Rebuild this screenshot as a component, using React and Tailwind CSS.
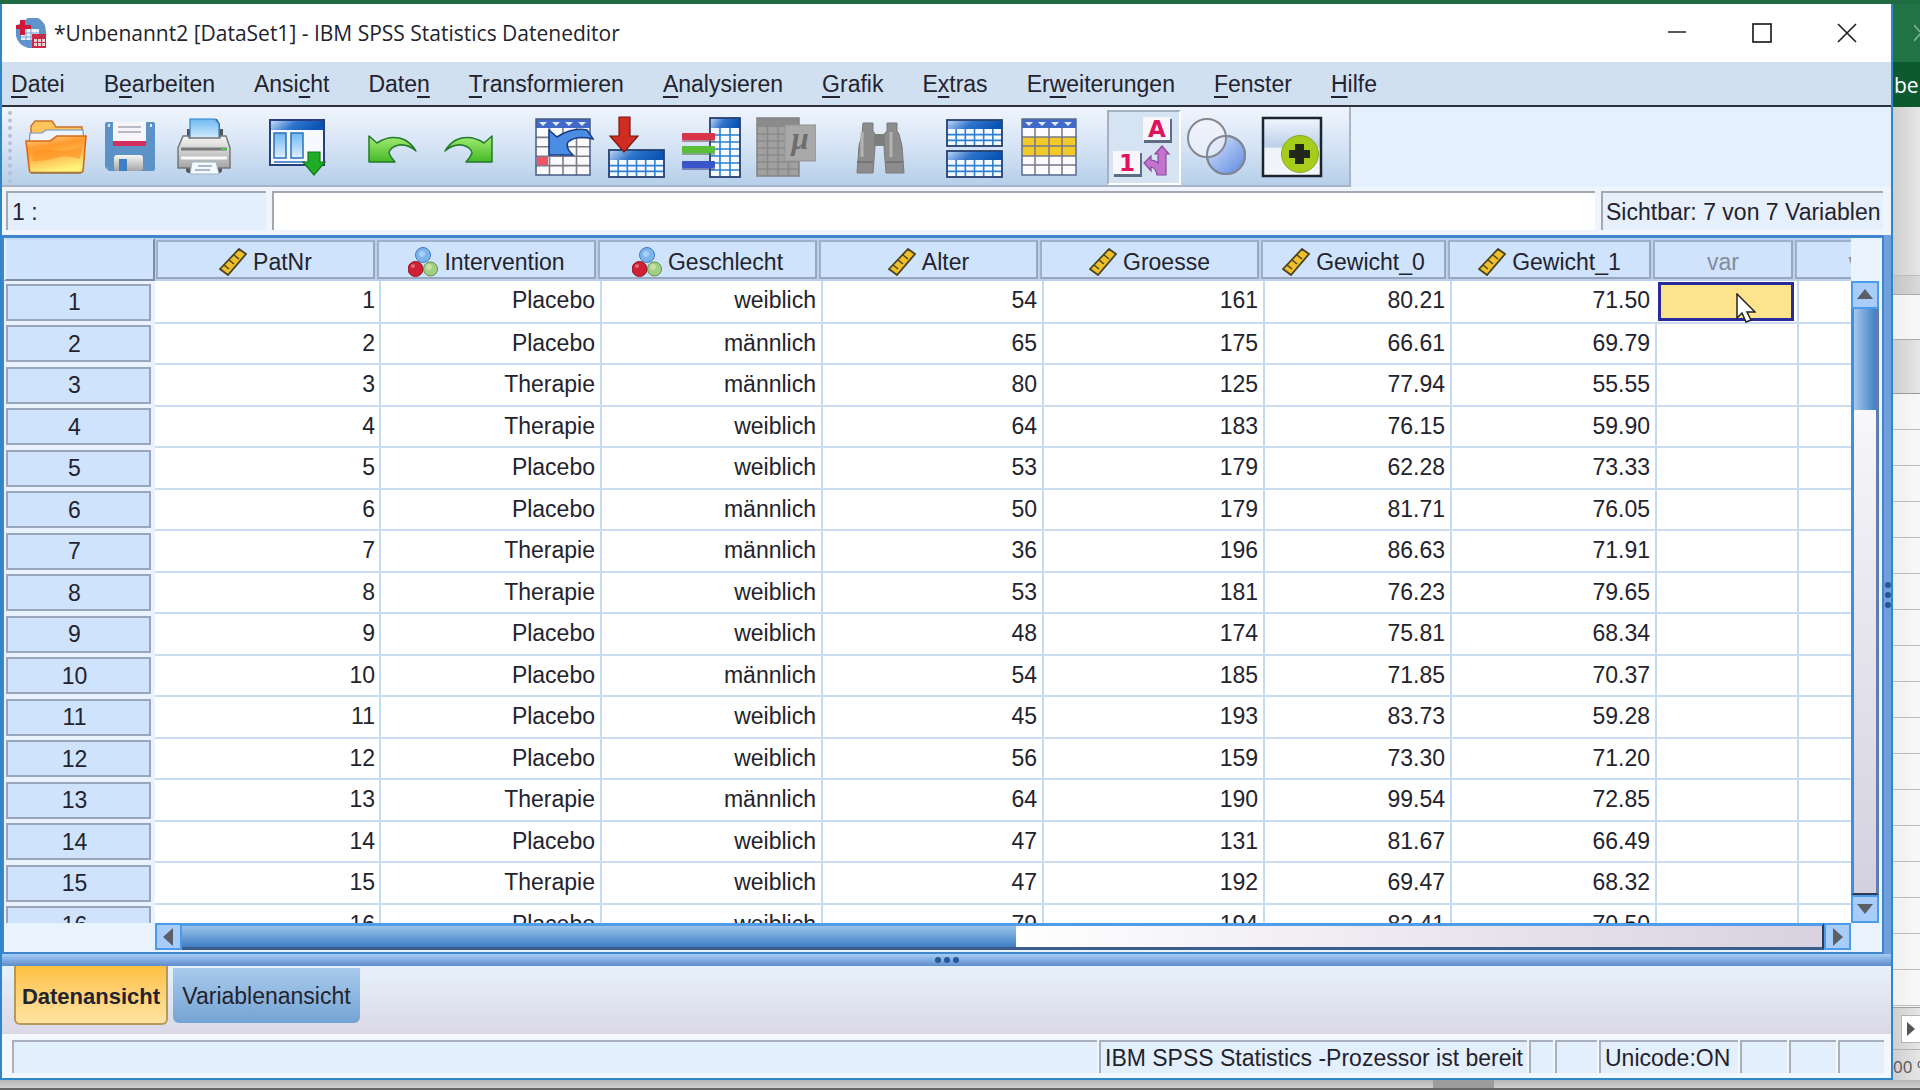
const menus = [
  ["", "D", "atei"],
  ["B", "e", "arbeiten"],
  ["Ansi", "c", "ht"],
  ["Date", "n", ""],
  ["", "T", "ransformieren"],
  ["", "A", "nalysieren"],
  ["", "G", "rafik"],
  ["E", "x", "tras"],
  ["Er", "w", "eiterungen"],
  ["", "F", "enster"],
  ["", "H", "ilfe"],
];

const columns = [
  { name: "PatNr", type: "scale" },
  { name: "Intervention", type: "nominal" },
  { name: "Geschlecht", type: "nominal" },
  { name: "Alter", type: "scale" },
  { name: "Groesse", type: "scale" },
  { name: "Gewicht_0", type: "scale" },
  { name: "Gewicht_1", type: "scale" },
  { name: "var" },
  { name: "var" },
];

const rows = [
  ["1", "Placebo", "weiblich", "54", "161", "80.21", "71.50"],
  ["2", "Placebo", "männlich", "65", "175", "66.61", "69.79"],
  ["3", "Therapie", "männlich", "80", "125", "77.94", "55.55"],
  ["4", "Therapie", "weiblich", "64", "183", "76.15", "59.90"],
  ["5", "Placebo", "weiblich", "53", "179", "62.28", "73.33"],
  ["6", "Placebo", "männlich", "50", "179", "81.71", "76.05"],
  ["7", "Therapie", "männlich", "36", "196", "86.63", "71.91"],
  ["8", "Therapie", "weiblich", "53", "181", "76.23", "79.65"],
  ["9", "Placebo", "weiblich", "48", "174", "75.81", "68.34"],
  ["10", "Placebo", "männlich", "54", "185", "71.85", "70.37"],
  ["11", "Placebo", "weiblich", "45", "193", "83.73", "59.28"],
  ["12", "Placebo", "weiblich", "56", "159", "73.30", "71.20"],
  ["13", "Therapie", "männlich", "64", "190", "99.54", "72.85"],
  ["14", "Placebo", "weiblich", "47", "131", "81.67", "66.49"],
  ["15", "Therapie", "weiblich", "47", "192", "69.47", "68.32"],
  ["16", "Placebo", "weiblich", "79", "194", "82.41", "70.50"],
];

// Shared gradients for the toolbar drawings
function IconDefs() {
  return (
    <svg className="absolute size-0" aria-hidden="true">
      <defs>
        <linearGradient id="orange" x1="0" y1="0" x2="0.3" y2="1">
          <stop offset="0" stopColor="#ffd9a0" />
          <stop offset="0.35" stopColor="#ff9a2a" />
          <stop offset="0.6" stopColor="#ffb04a" />
          <stop offset="1" stopColor="#fff27a" />
        </linearGradient>
        <linearGradient id="blueBar" x1="0" y1="0" x2="1" y2="0.2">
          <stop offset="0" stopColor="#c4dcf8" />
          <stop offset="0.5" stopColor="#2f74cc" />
          <stop offset="1" stopColor="#0a55b4" />
        </linearGradient>
        <linearGradient id="sky" x1="0" y1="0" x2="0" y2="1">
          <stop offset="0" stopColor="#6db8f2" />
          <stop offset="1" stopColor="#e0f1fe" />
        </linearGradient>
        <linearGradient id="metal" x1="0" y1="0" x2="0" y2="1">
          <stop offset="0" stopColor="#f6f6f4" />
          <stop offset="1" stopColor="#a5a5a5" />
        </linearGradient>
        <linearGradient id="green" x1="0" y1="0" x2="0" y2="1">
          <stop offset="0" stopColor="#a4ec72" />
          <stop offset="1" stopColor="#45b926" />
        </linearGradient>
        <linearGradient id="disc" x1="0" y1="0" x2="1" y2="1">
          <stop offset="0" stopColor="#dbe8fb" />
          <stop offset="1" stopColor="#5d88e2" />
        </linearGradient>
        <linearGradient id="sheet" x1="0" y1="0" x2="0" y2="1">
          <stop offset="0" stopColor="#f2f6fc" />
          <stop offset="0.5" stopColor="#b9d0ea" />
          <stop offset="0.52" stopColor="#eef3fa" />
          <stop offset="1" stopColor="#f4f5fa" />
        </linearGradient>
      </defs>
    </svg>
  );
}

function OpenIcon() {
  return (
    <>
      <path d="M6 34V10l4-5h17l4 6h26v23z" fill="#ffc45c" stroke="#c8742a" strokeWidth="1.5" />
      <path d="M4 30l1-13h12l4-3h37l1 14z" fill="#eef4fd" stroke="#6f93cf" strokeWidth="1.2" />
      <path d="M1 25h24l7-5h29l-3 35q-1 1.500-2 1.500H6q-1 0-1.500-1.500z" fill="url(#orange)" stroke="#d9681a" strokeWidth="1.600" />
      <path d="M7 37q12-6 22-3t28-3l-2 12q-14-5-25-1T8 45z" fill="#ff8c1c" opacity=".55" />
      <path d="M6 57h50" stroke="#8f7a52" strokeWidth="1.500" />
    </>
  );
}

function SaveIcon() {
  return (
    <>
      <path d="M8 6h46q2 0 2 2v45q0 2-2 2H10l-4-4V8q0-2 2-2z" fill="#5c92c6" />
      <path d="M14 6h33v23H14z" fill="#f6f5f9" />
      <path d="M14 25h33v5H14z" fill="#d32f5e" />
      <path d="M19 11h23M19 16h23" stroke="#b9b9c6" strokeWidth="2" />
      <rect x="15" y="39" width="29" height="16" rx="3" fill="url(#metal)" />
      <rect x="20" y="43" width="8" height="12" fill="#3f7fc4" />
      <rect x="9" y="8" width="2" height="3" fill="#dceafa" />
      <rect x="51" y="8" width="2" height="3" fill="#dceafa" />
    </>
  );
}

function PrintIcon() {
  return (
    <>
      <path d="M14 13h4V3h26l3 5v5h3v12H14z" fill="#555" />
      <path d="M17 3h25l4 5v16H17z" fill="url(#sky)" stroke="#2f82cc" strokeWidth="1.200" />
      <rect x="13" y="48" width="36" height="9" rx="3" fill="#555" />
      <path d="M10 20h6v2h31v-2h6l4 12v20H5V32z" fill="url(#metal)" stroke="#77777a" strokeWidth="1.500" />
      <path d="M8 33h46" stroke="#77777c" strokeWidth="3" />
      <path d="M48 33h6" stroke="#4cc34c" strokeWidth="2" />
      <path d="M8 42h46" stroke="#fafafa" strokeWidth="3" />
      <path d="M19 46h24l3 12H17z" fill="#f4f9fe" stroke="#9fb3c8" />
      <path d="M25 50h14M22 54h15" stroke="#8fa2bd" strokeWidth="1.500" />
    </>
  );
}

function DialogIcon() {
  return (
    <>
      <rect x="2" y="4" width="54" height="45" fill="#f6faff" stroke="#27407e" strokeWidth="2" />
      <rect x="3" y="5" width="52" height="9" fill="url(#blueBar)" />
      <rect x="6" y="17" width="12" height="25" fill="url(#sky)" stroke="#2d70ba" strokeWidth="1.500" />
      <rect x="23" y="17" width="12" height="25" fill="url(#sky)" stroke="#2d70ba" strokeWidth="1.500" />
      <path d="M6 46h31" stroke="#2d70ba" strokeWidth="1.500" />
      <path d="M40 36h12v10h5L46 59 35 46h5z" fill="#21ac26" stroke="#11791a" strokeWidth="1.200" />
    </>
  );
}

function UndoIcon() {
  return (
    <path
      d="M6 20l8 7q14-9 28-3q7 4 11 11q-8-7-17-6q-9 2-10 8q2 5 6 9H6z"
      fill="url(#green)" stroke="#237a2c" strokeWidth="1.500" strokeLinejoin="round"
    />
  );
}

function RedoIcon() {
  return (
    <path
      d="M55 20l-8 7q-14-9-28-3q-7 4-11 11q8-7 17-6q9 2 10 8q-2 5-6 9h26z"
      fill="url(#green)" stroke="#237a2c" strokeWidth="1.500" strokeLinejoin="round"
    />
  );
}

function Grid({ x, y, w, h, cols, lines, stroke, fill }) {
  let d = "";
  for (let i = 1; i < cols; i++) d += `M${x + (w * i) / cols} ${y}v${h}`;
  for (let i = 1; i < lines; i++) d += `M${x} ${y + (h * i) / lines}h${w}`;
  return (
    <>
      <rect x={x} y={y} width={w} height={h} fill={fill} />
      <path d={d} stroke={stroke} strokeWidth="1.600" />
    </>
  );
}

function SheetHead() {
  return (
    <>
      <rect x="4" y="3" width="54" height="9" fill="#4169c8" />
      <path d="M7 6h8l-4 4zM20 6h8l-4 4zM33 6h8l-4 4zM46 6h8l-4 4z" fill="#dfe9fb" />
    </>
  );
}

function GotoCaseIcon() {
  return (
    <>
      <Grid x={4} y={12} w={54} h={47} cols={4} lines={5} stroke="#7b7b86" fill="#fafafd" />
      <SheetHead />
      <rect x="5" y="41" width="11" height="8" fill="#f05464" />
      <rect x="4" y="3" width="54" height="56" fill="none" stroke="#4a5a86" strokeWidth="1.500" />
      <path d="M17 14l8 7q15-10 30-7l6 9q-17-4-25 3q-3 6 5 13H17z" fill="#4a8de2" stroke="#1a3f86" strokeWidth="1.600" />
    </>
  );
}

function BlueTable({ x, y, w, h, head, cols, lines }) {
  return (
    <>
      <Grid x={x} y={y + head} w={w} h={h - head} cols={cols} lines={lines} stroke="#2d7fd0" fill="#f4faff" />
      <rect x={x} y={y} width={w} height={head} fill="url(#blueBar)" />
      <rect x={x} y={y} width={w} height={h} fill="none" stroke="#25406f" strokeWidth="1.800" />
    </>
  );
}

function GotoVarIcon() {
  return (
    <>
      <BlueTable x={3} y={34} w={55} h={27} head={10} cols={6} lines={3} />
      <path d="M13 1h11v19h8L18 36 4 20h9z" fill="#cf2d22" stroke="#7e1712" strokeWidth="1.200" />
    </>
  );
}

function VariablesIcon() {
  return (
    <>
      <BlueTable x={30} y={2} w={30} h={59} head={10} cols={3} lines={7} />
      <rect x="2" y="17" width="33" height="7" rx="1" fill="#d8344a" />
      <rect x="2" y="24" width="33" height="2" fill="#8b5060" opacity=".6" />
      <rect x="2" y="30" width="33" height="7" rx="1" fill="#58bf36" />
      <rect x="2" y="37" width="33" height="2" fill="#4d7c50" opacity=".6" />
      <rect x="2" y="45" width="33" height="7" rx="1" fill="#3a55c8" />
      <rect x="2" y="52" width="33" height="2" fill="#40508f" opacity=".6" />
    </>
  );
}

function StatsIcon() {
  return (
    <>
      <Grid x={3} y={11} w={42} h={49} cols={4} lines={7} stroke="#8a8a8a" fill="#a0a0a0" />
      <rect x="3" y="2" width="42" height="9" fill="#8b8b8b" />
      <rect x="3" y="2" width="42" height="58" fill="none" stroke="#828282" strokeWidth="1.500" />
      <rect x="31" y="9" width="31" height="36" fill="#a8a8a8" stroke="#939393" />
      <text x="46" y="33" textAnchor="middle" fontSize="31" fontStyle="italic" fontWeight="bold" fill="#6d6d6d" fontFamily="Liberation Serif, serif">µ</text>
    </>
  );
}

function FindIcon() {
  return (
    <g fill="#8c8c8c">
      <path d="M14 7h10v8l2 3v13l-2 26H8l2-27 3-12zM38 7h10v8l2 3 3 12 2 27H37l-2-26V18l3-3z" stroke="#7a7a7a" />
      <rect x="25" y="18" width="11" height="12" fill="#7d7d7d" />
      <path d="M13 16v25M42 16v25" stroke="#b3b3b3" strokeWidth="3" />
      <path d="M8 46h16M37 46h17" stroke="#6c6c6c" strokeWidth="1.500" />
    </g>
  );
}

function SplitIcon() {
  return (
    <>
      <BlueTable x={3} y={4} w={55} h={26} head={9} cols={6} lines={3} />
      <BlueTable x={3} y={35} w={55} h={26} head={9} cols={6} lines={3} />
    </>
  );
}

function SelectIcon() {
  return (
    <>
      <rect x="4" y="12" width="54" height="47" fill="#fbfbfe" />
      <rect x="4" y="21" width="54" height="19" fill="#f0cb28" />
      <path d="M4 21h54M4 30h54M4 40h54M4 49h54M17 12v47M31 12v47M44 12v47" stroke="#77778a" strokeWidth="1.500" />
      <SheetHead />
      <rect x="4" y="3" width="54" height="56" fill="none" stroke="#5a6a92" strokeWidth="1.500" />
    </>
  );
}

function LabelsIcon() {
  return (
    <>
      <rect x="31" y="3" width="28" height="24" fill="#5d6d86" />
      <rect x="30" y="1" width="27" height="23" fill="#f7f7fb" />
      <rect x="1" y="37" width="28" height="24" fill="#5d6d86" />
      <rect x="0" y="35" width="27" height="23" fill="#f7f7fb" />
      <g fill="#e0115f" fontFamily="DejaVu Sans, sans-serif" fontWeight="bold" fontSize="23" textAnchor="middle">
        <text x="44" y="21">A</text>
        <text x="14" y="55">1</text>
      </g>
      <path d="M49 30l7 8h-3v21h-9q-1-7-6-8v4l-7-8 7-7v4q4 0 7 3V38h-3z" fill="#c273cb" stroke="#8a4a98" strokeWidth="1.200" />
    </>
  );
}

function SetsIcon() {
  return (
    <>
      <circle cx="39" cy="39" r="19" fill="url(#disc)" stroke="#7f8694" strokeWidth="2" />
      <circle cx="20" cy="22" r="19" fill="#f1f4fc" fillOpacity=".7" stroke="#85878f" strokeWidth="2" />
      <circle cx="39" cy="39" r="19" fill="none" stroke="#7f8694" strokeWidth="2" />
    </>
  );
}

function CustomizeIcon() {
  return (
    <>
      <rect x="2" y="2" width="58" height="58" fill="url(#sheet)" stroke="#1c2430" strokeWidth="2.500" />
      <circle cx="39" cy="38" r="18.500" fill="#a6cc1c" stroke="#86a81f" />
      <path d="M34 28h9v6h6v8h-6v6h-9v-6h-6v-8h6z" fill="#23261b" />
    </>
  );
}

const toolGroups = [
  [["Öffnen", OpenIcon], ["Speichern", SaveIcon], ["Drucken", PrintIcon]],
  [["Dialogfelder", DialogIcon]],
  [["Rückgängig", UndoIcon], ["Wiederholen", RedoIcon]],
  [["Gehe zu Fall", GotoCaseIcon], ["Gehe zu Variable", GotoVarIcon], ["Variablen", VariablesIcon], ["Statistik", StatsIcon]],
  [["Suchen", FindIcon]],
  [["Datei aufteilen", SplitIcon], ["Fälle auswählen", SelectIcon]],
  [["Wertelabels", LabelsIcon], ["Variablensets", SetsIcon], ["Anpassen", CustomizeIcon]],
];

function ScaleIcon() {
  return (
    <svg viewBox="0 0 28 28" className="size-7">
      <path d="M1 21L20 1l7 5L9 27z" fill="#f0c02c" stroke="#4b4420" strokeWidth="1.800" />
      <path d="M5 17l5 4M10 12l5 4M15 7l5 4" stroke="#4b4420" strokeWidth="1.600" />
    </svg>
  );
}

function NominalIcon() {
  return (
    <svg viewBox="0 0 30 30" className="size-[30px]">
      <circle cx="15" cy="8" r="7.500" fill="#7db4ec" stroke="#3f78bd" />
      <circle cx="7.500" cy="22" r="7.500" fill="#cf2236" stroke="#8d1526" />
      <circle cx="22.500" cy="22" r="7" fill="#a3cf84" stroke="#5f8f49" />
      <circle cx="14" cy="7" r="3" fill="#a9cff5" />
      <circle cx="5" cy="19" r="2" fill="#e66a78" />
      <circle cx="21" cy="20" r="3" fill="#c3e3ad" />
    </svg>
  );
}

function AppIcon() {
  return (
    <svg viewBox="0 0 30 30" className="size-[30px]">
      <path d="M12 0h10q8 4 8 14v10q-5 6-12 6h-6Q2 27 0 18V8z" fill="#5f93cc" />
      <path d="M5 11h18v11H5z" fill="#e8f0fa" />
      <path d="M5 15h18M5 19h18M10 11v11M15 11v11" stroke="#7ba3d3" />
      <path d="M4 2h5v5h6v4H9v6H4v-6H0V7h4z" fill="#d01838" />
      <path d="M16 16h14v14H16z" fill="#c92a48" />
      <path d="M18 21h3v3h-3zM22 21h3v3h-3zM26 21h3v3h-3zM18 25h3v3h-3zM22 25h3v3h-3zM26 25h3v3h-3z" fill="#f5ccd4" />
    </svg>
  );
}

function TitleBar() {
  return (
    <header className="flex h-[58px] shrink-0 items-center bg-white pr-[2px] pl-[14px]">
      <AppIcon />
      <h1 className="ml-2 flex-1 font-['Open_Sans',sans-serif] text-[21px]">
        *Unbenannt2 [DataSet1] - IBM SPSS Statistics Dateneditor
      </h1>
      <button aria-label="Minimieren" className="flex w-[85px] justify-center">
        <svg viewBox="0 0 20 20" className="size-5"><path d="M1 9h18" stroke="#222" strokeWidth="1.500" /></svg>
      </button>
      <button aria-label="Maximieren" className="flex w-[85px] justify-center">
        <svg viewBox="0 0 20 20" className="size-5"><rect x="1" y="1" width="18" height="18" fill="none" stroke="#222" strokeWidth="1.700" /></svg>
      </button>
      <button aria-label="Schließen" className="flex w-[85px] justify-center">
        <svg viewBox="0 0 20 20" className="size-5"><path d="M1 1l18 18M19 1L1 19" stroke="#222" strokeWidth="1.700" /></svg>
      </button>
    </header>
  );
}

function MenuBar() {
  return (
    <nav className="flex h-[45px] shrink-0 items-center gap-[39px] border-b-2 border-[#2b323c] bg-[#d0e0f1] pl-[9px]">
      {menus.map(([before, key, after]) => (
        <button key={before + key + after} className="whitespace-nowrap">
          {before}
          <span className="underline decoration-2 underline-offset-4">{key}</span>
          {after}
        </button>
      ))}
    </nav>
  );
}

function Toolbar() {
  return (
    <div className="flex h-20 shrink-0 bg-[#e4f0fc]">
      <div className="flex items-center gap-[21px] border-r-2 border-b-2 border-[#a9b4c6] bg-linear-to-b from-[#f0f5fd] via-[#d6e4f5] to-[#b6cfe9] pt-[2px] pr-5">
        <div className="-mr-[14px] ml-[6px] h-[72px] w-1 border-l-4 border-dotted border-[#b3bfd3]" />
        {toolGroups.map((group, i) => (
          <div key={i} className="flex">
            {group.map(([label, Icon]) => (
              <button
                key={label}
                aria-label={label}
                className={
                  label === "Wertelabels"
                    ? "flex h-[75px] w-[74px] items-center justify-center border-2 border-t-[#a7b0c2] border-r-white border-b-white border-l-[#a7b0c2] bg-[#d5e3f3]"
                    : "flex h-[75px] w-[74px] items-center justify-center"
                }
              >
                <svg viewBox="0 0 62 62" className="size-[62px] shrink-0"><Icon /></svg>
              </button>
            ))}
          </div>
        ))}
      </div>
    </div>
  );
}

function EditRow() {
  return (
    <div className="flex h-[48px] shrink-0 gap-[6px] bg-[#f0f5fd] pt-1 pr-2 pb-[5px] pl-1">
      <input
        aria-label="Zelle"
        defaultValue="1 :"
        className="w-[260px] border-t-2 border-l-2 border-[#a3a8b3] bg-[#e3effc] pl-1 outline-none"
      />
      <input aria-label="Zellinhalt" className="min-w-0 flex-1 border-t-2 border-l-2 border-[#a3a8b3] bg-white outline-none" />
      <div className="flex w-[282px] items-center border-t-2 border-l-2 border-[#a3a8b3] bg-[#e6effc] pl-[3px] whitespace-nowrap">
        Sichtbar: 7 von 7 Variablen
      </div>
    </div>
  );
}

function DataGrid() {
  return (
    <table className="w-[1931px] table-fixed border-collapse">
      <colgroup>
        <col className="w-[151px]" />
        <col className="w-[221px]" />
        <col className="w-[221px]" />
        <col className="w-[221px]" />
        <col className="w-[221px]" />
        <col className="w-[221px]" />
        <col className="w-[187px]" />
        <col className="w-[205px]" />
        <col className="w-[142px]" />
        <col className="w-[141px]" />
      </colgroup>
      <thead>
        <tr className="h-[43px] bg-[#b9d0ee]">
          <td className="p-0">
            <div className="h-[43px] border-2 border-t-[#c5dcf8] border-r-[#7f8da3] border-b-[#7f8da3] border-l-[#e6f1ff] bg-[#cfe3fd]" />
          </td>
          {columns.map((col, i) => (
            <th key={i} scope="col" className="p-0 font-normal">
              <div className="mx-[1px] mt-[2px] mb-[2px] flex h-[39px] items-center justify-center gap-[6px] border-2 border-t-[#9eb0ca] border-r-[#9aa6bd] border-b-[#9aa6bd] border-l-[#9eb0ca] bg-[#cfe3fd] pt-1">
                {col.type === "scale" && <ScaleIcon />}
                {col.type === "nominal" && <NominalIcon />}
                <span className={col.type ? "" : "text-[#858c9c]"}>{col.name}</span>
              </div>
            </th>
          ))}
        </tr>
      </thead>
      <tbody>
        {rows.map((row, r) => (
          <tr key={row[0]} className="h-[41px] odd:h-[42px]">
            <th scope="row" className="bg-[#e9f2fe] p-0 font-normal">
              <div className="mr-[4px] ml-[2px] flex h-[37px] items-center justify-center border-2 border-[#98a6bb] bg-[#cfe3fd] pr-2">
                {row[0]}
              </div>
            </th>
            {columns.map((col, c) => (
              <td key={c} className="h-px border-b-2 border-[#c9dcf0] p-0 pl-[3px] text-right">
                {r === 0 && c === 7 ? (
                  <div className="relative ml-[3px] h-[39px] w-[136px] border-[3px] border-[#2a2a9c] bg-[#fde48c]">
                    <svg viewBox="0 0 20 30" className="absolute top-2 left-[75px] h-[30px] w-5">
                      <path d="M1 1v24l5-5 4 9 5-2-4-8h8z" fill="#fff" stroke="#222" strokeWidth="1.500" />
                    </svg>
                  </div>
                ) : (
                  <div className={c === 0 ? "h-full min-h-[39px] pt-px pr-px leading-9" : "h-full min-h-[39px] border-l-2 border-[#c3dbf3] pt-px pr-[2px] leading-9"}>{row[c]}</div>
                )}
              </td>
            ))}
          </tr>
        ))}
      </tbody>
    </table>
  );
}

function Arrow({ d }) {
  return (
    <svg viewBox="0 0 20 20" className="size-5">
      <path d={d} fill="#5a6068" />
    </svg>
  );
}

function GridPanel() {
  return (
    <div className="flex min-h-0 flex-1 bg-linear-to-r from-[#a7ccf5] to-[#6f9fdc]">
      <div className="flex min-w-0 flex-1 flex-col border-2 border-t-[3px] border-[#3f85cc] bg-[#e9f3fe]">
        <div className="flex min-h-0 flex-1">
          <div className="min-w-0 flex-1 overflow-hidden bg-white">
            <DataGrid />
          </div>
          <div className="flex w-[31px] shrink-0 flex-col pt-[43px] pr-[3px]">
            <button aria-label="Nach oben" className="flex h-[28px] items-center justify-center border-2 border-[#4b9bea] bg-[#a9cdfa]">
              <Arrow d="M10 4l8 10H2z" />
            </button>
            <div className="flex-1 border-r-[3px] border-b-2 border-l-[3px] border-r-[#5e7fae] border-b-[#333a55] border-l-[#3d8fe0] bg-linear-to-b from-white to-[#d3d1e0]">
              <div className="h-[101px] bg-linear-to-r from-[#a5c8ea] to-[#3f80c4]" />
            </div>
            <button aria-label="Nach unten" className="flex h-[28px] items-center justify-center border-2 border-[#4b9bea] bg-[#a9cdfa]">
              <Arrow d="M10 15l8-10H2z" />
            </button>
          </div>
        </div>
        <div className="flex h-[29px] shrink-0 pr-[31px] pb-[2px] pl-[151px]">
          <button aria-label="Nach links" className="flex w-[27px] items-center justify-center border-2 border-[#4b9bea] bg-[#a9cdfa]">
            <Arrow d="M4 10L14 1v18z" />
          </button>
          <div className="flex-1 border-t-[3px] border-r-2 border-b-[3px] border-t-[#4f9de8] border-r-[#333a55] border-b-[#3c5c8c] bg-linear-to-r from-[#d8d6e2] via-white to-[#d8d2e0]">
            <div className="h-full w-[834px] bg-linear-to-b from-[#9cc3e8] to-[#3b7fc6]" />
          </div>
          <button aria-label="Nach rechts" className="flex w-[27px] items-center justify-center border-2 border-[#4b9bea] bg-[#a9cdfa]">
            <Arrow d="M15 10L5 1v18z" />
          </button>
        </div>
      </div>
      <div className="flex w-[7px] shrink-0 flex-col items-center justify-center gap-1">
        <span className="size-[6px] rounded-full bg-[#28569a]" />
        <span className="size-[6px] rounded-full bg-[#28569a]" />
        <span className="size-[6px] rounded-full bg-[#28569a]" />
      </div>
    </div>
  );
}

function ViewTabs() {
  return (
    <div role="tablist" className="flex h-[68px] shrink-0 items-start gap-[5px] bg-linear-to-b from-[#e6f1fc] to-[#dbd8e6] pl-[12px]">
      <button
        role="tab"
        aria-selected="true"
        className="h-[59px] w-[154px] rounded-b-md border-2 border-t-0 border-[#b59a55] bg-linear-to-b from-[#fdc140] to-[#ffe3a0] pt-1 text-[22px] font-bold"
      >
        Datenansicht
      </button>
      <button
        role="tab"
        aria-selected="false"
        className="mt-[2px] h-[55px] w-[187px] rounded-b-md bg-linear-to-b from-[#a9cbec] to-[#74a3d3]"
      >
        Variablenansicht
      </button>
    </div>
  );
}

function StatusBar() {
  return (
    <footer className="flex h-11 shrink-0 gap-[2px] bg-[#f3f7fe] pt-[6px] pr-[7px] pb-[5px] pl-[10px] whitespace-nowrap *:flex *:items-center *:border-t-2 *:border-l-2 *:border-[#a9b0bb] *:bg-[#e3effc]">
      <div className="flex-1" />
      <div className="w-[428px] pl-1">IBM SPSS Statistics -Prozessor ist bereit</div>
      <div className="w-6" />
      <div className="w-[42px]" />
      <div className="w-[139px] pl-1">Unicode:ON</div>
      <div className="w-[47px]" />
      <div className="w-[47px]" />
      <div className="w-[46px]" />
    </footer>
  );
}

// Sliver of the spreadsheet window standing behind the data editor
function BackWindow() {
  return (
    <aside className="flex w-[27px] shrink-0 flex-col overflow-hidden bg-linear-to-r from-[#cfcfcf] to-[#e6e6e6]">
      <div className="flex h-[58px] shrink-0 items-center justify-end bg-[#217346]">
        <svg viewBox="0 0 6 20" className="h-5 w-[6px]"><path d="M0 2l6 7M0 18l6-7" stroke="#7fb598" strokeWidth="1.500" /></svg>
      </div>
      <div className="flex h-[45px] shrink-0 items-center bg-[#0e5a30] pl-px font-['Open_Sans',sans-serif] text-[21px] text-white">be</div>
      <div className="h-[169px] shrink-0 border-b border-[#bdbdbd]" />
      <div className="h-[19px] shrink-0 border-b border-[#ababab] bg-black/5" />
      <div className="h-[45px] shrink-0 border-b border-[#ababab] bg-white/70" />
      <div className="h-[54px] shrink-0 border-b border-[#9a9a9a]" />
      <div className="flex min-h-0 flex-1 flex-col overflow-hidden border-b border-[#9f9f9f] bg-white/70">
        {Array.from({ length: 17 }, (_, i) => (
          <div key={i} className="h-9 shrink-0 border-b border-[#bdbdbd]" />
        ))}
      </div>
      <div className="flex h-[42px] shrink-0 items-center border-b border-[#b0b0b0] pl-2">
        <button aria-label="Blättern" className="flex h-7 w-5 shrink-0 items-center justify-center border border-[#b5b5b5] bg-white">
          <svg viewBox="0 0 8 14" className="h-[14px] w-2"><path d="M0 0l8 7-8 7z" fill="#555" /></svg>
        </button>
      </div>
      <div className="flex h-[30px] shrink-0 items-center pt-1 font-['Open_Sans',sans-serif] text-[17px] whitespace-nowrap text-[#555]">00 %</div>
    </aside>
  );
}

export default function App() {
  return (
    <div className="flex h-screen flex-col overflow-hidden bg-[#1f6b42] pt-1 font-['Liberation_Sans',Arial,sans-serif] text-[23px] leading-7 text-[#23232e]">
      <IconDefs />
      <div className="flex min-h-0 flex-1">
        <main className="flex min-w-0 flex-1 flex-col border-r-2 border-b-2 border-l-2 border-[#2f86c8]">
          <TitleBar />
          <MenuBar />
          <Toolbar />
          <EditRow />
          <GridPanel />
          <div className="flex h-3 shrink-0 items-center justify-center gap-[3px] bg-linear-to-b from-[#a5cdf5] to-[#5f8ccb]">
            <span className="size-[6px] rounded-full bg-[#28569a]" />
            <span className="size-[6px] rounded-full bg-[#28569a]" />
            <span className="size-[6px] rounded-full bg-[#28569a]" />
          </div>
          <ViewTabs />
          <StatusBar />
        </main>
        <BackWindow />
      </div>
      <div className="flex h-[10px] shrink-0 justify-center border-b-2 border-[#666] bg-linear-to-b from-[#b5b5b5] to-[#cfcfcf]">
        <div className="ml-[1006px] w-[61px] bg-[#9c9c9c]" />
      </div>
    </div>
  );
}
